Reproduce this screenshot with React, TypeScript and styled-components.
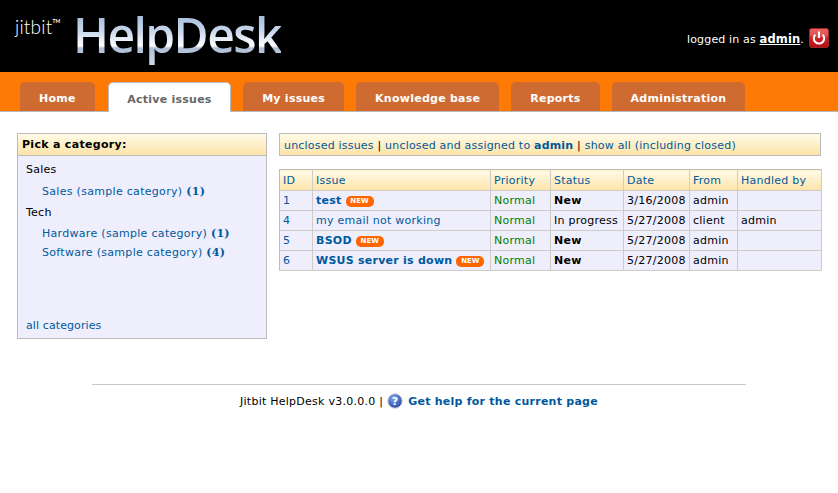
import styled, { createGlobalStyle } from "styled-components";

const GlobalStyle = createGlobalStyle`
  html, body {
    margin: 0;
    padding: 0;
    background: #fff;
    font-family: "DejaVu Sans", Verdana, sans-serif;
    font-size: 11px;
    letter-spacing: 0.25px;
    color: #000;
  }
  a {
    color: #00599c;
    text-decoration: none;
  }
`;

const Header = styled.header`
  height: 72px;
  background: #000;
  display: flex;
  align-items: flex-start;
  justify-content: space-between;
`;

const Logo = styled.div`
  display: flex;
  align-items: flex-start;
  padding-left: 15px;
`;

const LogoSmall = styled.span`
  font-family: "Lato", sans-serif;
  font-weight: 300;
  font-size: 19px;
  line-height: 20px;
  color: #fff;
  margin-top: 17px;
  letter-spacing: 0.2px;
  width: 58px;
  & > sup {
    font-size: 5px;
    line-height: 5px;
    vertical-align: 11px;
    font-weight: 700;
  }
`;

const LogoBig = styled.span`
  font-family: "Open Sans", sans-serif;
  font-weight: 600;
  font-size: 48px;
  line-height: 60px;
  letter-spacing: -1.6px;
  margin-top: 5px;
  background: linear-gradient(
    #a9bfdc 20%,
    #c5d5ea 42%,
    #ffffff 68%,
    #aebfd6 72%,
    #cbd9ec 100%
  );
  background-clip: text;
  -webkit-background-clip: text;
  color: transparent;
`;

const UserBox = styled.div`
  display: flex;
  align-items: center;
  gap: 5px;
  color: #fff;
  padding: 28px 9px 0 0;
  & b {
    text-decoration: underline;
    font-size: 11.5px;
  }
`;

const UserText = styled.span`
  padding-top: 1px;
  letter-spacing: 0.15px;
`;

const PowerIcon = () => (
  <svg width="20" height="20" viewBox="0 0 20 20">
    <defs>
      <linearGradient id="pw" x1="0" y1="0" x2="0" y2="1">
        <stop offset="0" stopColor="#e8413f" />
        <stop offset="1" stopColor="#b30c12" />
      </linearGradient>
    </defs>
    <rect x="0.5" y="0.5" width="19" height="19" rx="2" fill="url(#pw)" stroke="#9a2a2a" />
    <path d="M1 3a2 2 0 0 1 2-2h14a2 2 0 0 1 2 2v5q-9 3-18 0z" fill="#fff" opacity="0.18" />
    <path d="M6.4 6.6a5.2 5.2 0 1 0 7.2 0" fill="none" stroke="#fff" strokeWidth="2" />
    <path d="M10 3.5v6.5" fill="none" stroke="#fff" strokeWidth="2" />
  </svg>
);

const TabBar = styled.nav`
  height: 40px;
  box-sizing: border-box;
  background: #ff7a05;
  border-bottom: 1px solid #b9b9b9;
  padding: 10px 0 0 20px;
  display: flex;
  gap: 12px;
`;

const Tab = styled.a<{ $active?: boolean }>`
  box-sizing: border-box;
  padding: 3px ${(p) => (p.$active ? "18.5px" : "19px")} 0;
  border-radius: 5px 5px 0 0;
  display: flex;
  align-items: center;
  font-weight: 700;
  background: ${(p) => (p.$active ? "#fff" : "#cf6b31")};
  color: ${(p) => (p.$active ? "#666" : "#fff")};
  border: ${(p) => (p.$active ? "1px solid #b9b9b9" : "0")};
  border-bottom: 0;
  margin-bottom: ${(p) => (p.$active ? "-1px" : "0")};
  margin-left: ${(p) => (p.$active ? "1px" : "0")};
  height: ${(p) => (p.$active ? "30px" : "29px")};
`;

const Main = styled.main`
  display: flex;
  align-items: flex-start;
  gap: 12px;
  padding: 21px 17px 0;
`;

const Sidebar = styled.aside`
  width: 250px;
  height: 206px;
  box-sizing: border-box;
  flex: none;
  border: 1px solid #bcbcbc;
  background: #eeeefc;
  display: flex;
  flex-direction: column;
`;

const SidebarTitle = styled.div`
  height: 22px;
  box-sizing: border-box;
  padding: 0 4px;
  line-height: 21px;
  font-weight: 700;
  letter-spacing: 0.3px;
  background: linear-gradient(#fffbe8, #fde3a8);
  border-bottom: 1px solid #bcbcbc;
`;

const CategoryList = styled.div`
  flex: 1;
  padding: 4px 8px 5px;
  display: flex;
  flex-direction: column;
`;

const SectionName = styled.div`
  line-height: 19px;
  height: 21px;
  &:first-child {
    height: 22px;
  }
`;

const CategoryRow = styled.div<{ $last?: boolean }>`
  padding-left: 16px;
  line-height: 19px;
  letter-spacing: 0.3px;
  height: ${(p) => (p.$last ? "21px" : "19px")};
  & > a > b {
    font-family: "DejaVu Serif", "Liberation Serif", serif;
  }
`;

const AllLink = styled.a`
  margin-top: auto;
  line-height: 15px;
  letter-spacing: 0.1px;
`;

const Content = styled.section`
  flex: 1;
  min-width: 0;
`;

const FilterBar = styled.div`
  height: 23px;
  box-sizing: border-box;
  border: 1px solid #bcbcbc;
  padding: 0 4px;
  line-height: 23px;
  letter-spacing: 0.2px;
  background: linear-gradient(#fffbe8, #fde3a8);
  margin-bottom: 13px;
`;

const IssueTable = styled.table`
  width: 542px;
  table-layout: fixed;
  border-collapse: collapse;
  border: 1px solid #bcbcbc;
  background: #eeeefc;
`;

const HeadCell = styled.th`
  height: 20px;
  padding: 0 3px;
  text-align: left;
  font-weight: 400;
  color: #00599c;
  border-right: 1px solid #cfcbc6;
  border-bottom: 1px solid #cfcbc6;
  background: linear-gradient(#fffbe8, #fde3a8);
`;

const Cell = styled.td<{ $tone?: string }>`
  height: 19px;
  padding: 0 3px;
  white-space: nowrap;
  overflow: hidden;
  color: ${(p) => p.$tone || "#000"};
  border-right: 1px solid #cfcbc6;
  border-bottom: 1px solid #cfcbc6;
`;

const NewBadge = styled.span`
  display: inline-block;
  margin-left: 4px;
  width: 28px;
  height: 11px;
  border-radius: 5px;
  background: #ff6600;
  color: #fff;
  font-size: 7px;
  font-weight: 700;
  letter-spacing: 0;
  line-height: 11px;
  text-align: center;
  vertical-align: 1px;
`;

const Footer = styled.footer`
  width: 654px;
  margin: 45px auto 0;
  border-top: 1px solid #c8c8c8;
  padding-top: 6px;
  display: flex;
  align-items: center;
  justify-content: center;
  gap: 4px;
  height: 20px;
  & > a {
    font-weight: 700;
    margin-left: 1px;
  }
`;

const HelpIcon = () => (
  <svg width="16" height="16" viewBox="0 0 16 16">
    <defs>
      <radialGradient id="hp" cx="0.4" cy="0.3" r="0.8">
        <stop offset="0" stopColor="#7fa6ea" />
        <stop offset="1" stopColor="#1c3f9e" />
      </radialGradient>
    </defs>
    <circle cx="8" cy="8" r="7.2" fill="url(#hp)" stroke="#c9c9d4" />
    <text x="8" y="12" textAnchor="middle" fontSize="11" fontWeight="700" fill="#fff" fontFamily="DejaVu Sans">
      ?
    </text>
  </svg>
);

type Issue = {
  id: number;
  title: string;
  isNew: boolean;
  status: string;
  date: string;
  from: string;
  handler: string;
};

const issues: Issue[] = [
  { id: 1, title: "test", isNew: true, status: "New", date: "3/16/2008", from: "admin", handler: "" },
  { id: 4, title: "my email not working", isNew: false, status: "In progress", date: "5/27/2008", from: "client", handler: "admin" },
  { id: 5, title: "BSOD", isNew: true, status: "New", date: "5/27/2008", from: "admin", handler: "" },
  { id: 6, title: "WSUS server is down", isNew: true, status: "New", date: "5/27/2008", from: "admin", handler: "" },
];

const tabs = ["Home", "Active issues", "My issues", "Knowledge base", "Reports", "Administration"];
const columns: [string, number][] = [
  ["ID", 33],
  ["Issue", 178],
  ["Priority", 60],
  ["Status", 73],
  ["Date", 66],
  ["From", 48],
  ["Handled by", 84],
];

export default function App() {
  return (
    <>
      <GlobalStyle />
      <Header>
        <Logo>
          <LogoSmall>
            jitbit<sup>TM</sup>
          </LogoSmall>
          <LogoBig>HelpDesk</LogoBig>
        </Logo>
        <UserBox>
          <UserText>
            logged in as <b>admin</b>.
          </UserText>
          <PowerIcon />
        </UserBox>
      </Header>
      <TabBar>
        {tabs.map((t) => (
          <Tab key={t} href="#" $active={t === "Active issues"}>
            {t}
          </Tab>
        ))}
      </TabBar>
      <Main>
        <Sidebar>
          <SidebarTitle>Pick a category:</SidebarTitle>
          <CategoryList>
            <SectionName>Sales</SectionName>
            <CategoryRow $last>
              <a href="#">
                Sales (sample category) <b>(1)</b>
              </a>
            </CategoryRow>
            <SectionName>Tech</SectionName>
            <CategoryRow>
              <a href="#">
                Hardware (sample category) <b>(1)</b>
              </a>
            </CategoryRow>
            <CategoryRow>
              <a href="#">
                Software (sample category) <b>(4)</b>
              </a>
            </CategoryRow>
            <AllLink href="#">all categories</AllLink>
          </CategoryList>
        </Sidebar>
        <Content>
          <FilterBar>
            <a href="#">unclosed issues</a> | <a href="#">unclosed and assigned to <b>admin</b></a> |{" "}
            <a href="#">show all (including closed)</a>
          </FilterBar>
          <IssueTable>
            <colgroup>
              {columns.map(([name, w]) => (
                <col key={name} width={w} />
              ))}
            </colgroup>
            <thead>
              <tr>
                {columns.map(([name]) => (
                  <HeadCell key={name}>{name}</HeadCell>
                ))}
              </tr>
            </thead>
            <tbody>
              {issues.map((i) => (
                <tr key={i.id}>
                  <Cell $tone="#00599c">{i.id}</Cell>
                  <Cell>
                    <a href="#">{i.isNew ? <b>{i.title}</b> : i.title}</a>
                    {i.isNew && <NewBadge>NEW</NewBadge>}
                  </Cell>
                  <Cell $tone="#008000">Normal</Cell>
                  <Cell>{i.status === "New" ? <b>New</b> : i.status}</Cell>
                  <Cell>{i.date}</Cell>
                  <Cell>{i.from}</Cell>
                  <Cell>{i.handler}</Cell>
                </tr>
              ))}
            </tbody>
          </IssueTable>
        </Content>
      </Main>
      <Footer>
        <span>Jitbit HelpDesk v3.0.0.0 |</span>
        <HelpIcon />
        <a href="#">Get help for the current page</a>
      </Footer>
    </>
  );
}
